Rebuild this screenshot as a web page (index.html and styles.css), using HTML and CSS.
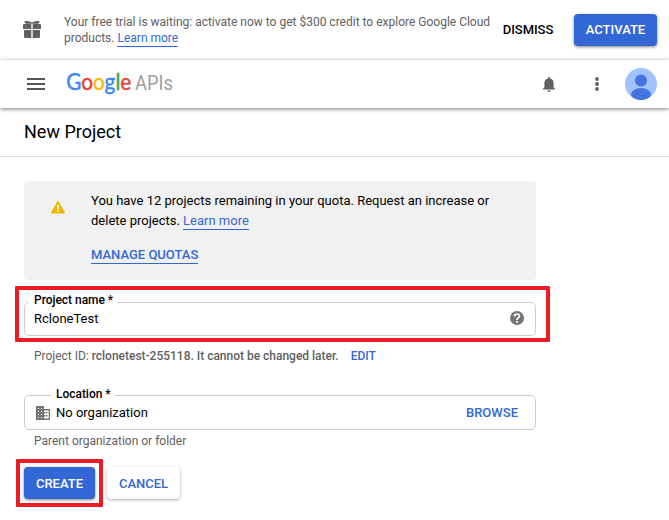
FILE: index.html
```html
<!DOCTYPE html>
<html lang="en">
<head>
<meta charset="utf-8">
<title>New Project</title>
<link rel="stylesheet" href="styles.css">
</head>
<body>
<section class="trial">
  <svg class="gift" width="18" height="19" viewBox="0 0 18 19"><path d="M1.2 1.2Q5 .3 9 2.4 13 .3 16.800 1.200L15.500 3.800H2.500zM0 5Q0 4 1 4H8.300V9H0zM9.700 4H17Q18 4 18 5V9H9.700zM1 10H8.300V18H2Q1 18 1 17zM9.700 10H17V17Q17 18 16 18H9.700z"/></svg>
  <p class="trial-text">Your free trial is waiting: activate now to get $300 credit to explore Google Cloud<br>products. <a class="link" href="#">Learn more</a></p>
  <button class="btn dismiss">DISMISS</button>
  <button class="btn primary activate">ACTIVATE</button>
</section>
<header class="topbar">
  <svg class="menu" width="18" height="12" viewBox="0 0 18 12"><path d="M0 0h18v2H0zM0 5h18v2H0zM0 10h18v2H0z"/></svg>
  <svg class="logo" width="108" height="30" viewBox="0 0 108 30">
    <text class="brand" x="-.8" y="21" textLength="65" lengthAdjust="spacingAndGlyphs"><tspan class="blue">G</tspan><tspan class="red">o</tspan><tspan class="yellow">o</tspan><tspan class="blue">g</tspan><tspan class="green">l</tspan><tspan class="red">e</tspan></text>
    <text class="apis" x="68" y="21" textLength="38" lengthAdjust="spacingAndGlyphs">APIs</text>
  </svg>
  <svg class="bell" width="12" height="15" viewBox="0 0 12 15"><path d="M4.500 13.500h3a1.500 1.500 0 0 1-3 0zM0 12.500v-.8L1.400 10.300V6Q1.400 2.500 5 1.600V1a1 1 0 0 1 2 0v.6Q10.600 2.500 10.600 6v4.300L12 11.700v.8z"/></svg>
  <svg class="more" width="4" height="14" viewBox="0 0 4 14"><circle cx="2" cy="2" r="1.900"/><circle cx="2" cy="7" r="1.900"/><circle cx="2" cy="12" r="1.900"/></svg>
  <svg class="avatar" width="32" height="32" viewBox="0 0 32 32"><defs><clipPath id="face"><circle cx="16" cy="16" r="16"/></clipPath></defs><g clip-path="url(#face)"><rect width="32" height="32" fill="#a0c3ff"/><circle cx="16" cy="12.500" r="6" fill="#4374e0"/><ellipse cx="16" cy="26.300" rx="10" ry="6.200" fill="#4374e0"/></g></svg>
</header>
<h1 class="title"><span>New Project</span></h1>
<main class="content">
  <section class="quota">
    <svg class="warning" width="14" height="13" viewBox="0 0 14 13"><path fill="#f4b400" d="M6 .9Q7-.7 8 .9L13.700 11Q14.200 12.500 13 12.500H1Q-.2 12.500 .3 11z"/><path fill="#fff" d="M6 4h2v4H6zM6 9h2v1.700H6z"/></svg>
    <div>
      <p class="quota-text">You have 12 projects remaining in your quota. Request an increase or<br>delete projects. <a class="link" href="#">Learn more</a></p>
      <a class="link manage" href="#">MANAGE QUOTAS</a>
    </div>
  </section>
  <div class="field name-field">
    <span class="label"><span>Project name *</span></span>
    <span class="value">RcloneTest</span>
    <svg class="help" width="14" height="14" viewBox="0 0 14 14"><circle cx="7" cy="7" r="7" fill="#757575"/><path d="M4.500 5.500Q4.500 3 7 3T9.500 5.300Q9.500 6.200 8.100 7 7 7.700 7 9" fill="none" stroke="#fff" stroke-width="1.700"/><path fill="#fff" d="M6.100 10h1.800v1.700H6.100z"/></svg>
    <i class="highlight highlight-name"></i>
  </div>
  <p class="project-id"><span>Project ID: <b>rclonetest-255118. It cannot be changed later.</b></span><a href="#">EDIT</a></p>
  <div class="field location-field">
    <span class="label"><span>Location *</span></span>
    <svg class="building" width="14" height="14" viewBox="0 0 14 14"><path fill="#757575" fill-rule="evenodd" d="M0 0h8v3h6v11H0zM2 2v1h1V2zM5 2v1h1V2zM2 5v1h1V5zM5 5v1h1V5zM2 8v1h1V8zM5 8v1h1V8zM2 11v1h1v-1zM5 11v1h1v-1zM8 4.500V6h1.500v1.500H8V9h1.500v1.500H8v2h4.700v-8zM10 6h1.500v1.500H10zM10 9h1.500v1.500H10z"/></svg>
    <span class="value">No organization</span>
    <a class="browse" href="#">BROWSE</a>
  </div>
  <p class="hint">Parent organization or folder</p>
  <div class="actions">
    <button class="btn primary create">CREATE</button>
    <button class="btn cancel">CANCEL</button>
    <i class="highlight highlight-create"></i>
  </div>
</main>
</body>
</html>
```

FILE: styles.css
```css
* { box-sizing: border-box; }
body { margin: 0; height: 520px; overflow: hidden; background: #fff; color: #000; font: 13px/20px Roboto, sans-serif; }
p, h1 { margin: 0; white-space: nowrap; }
svg { display: block; flex: none; }
a { color: #3367d6; text-decoration: none; }
.link { display: inline-block; border-bottom: 1px solid #3367d6; }
.btn { height: 32px; padding: 0; border: 0; border-radius: 4px; background: #fff; font: 500 13px/32px Roboto, sans-serif; flex: none; }
.primary { background: #3367d6; color: #fff; box-shadow: 0 1px 3px rgba(0,0,0,.5); }

.trial { display: flex; height: 60px; padding-left: 23px; align-items: flex-start; }
.gift { margin-top: 20px; fill: #616161; }
.trial-text { width: 427px; margin: 14px 0 0 23px; font-size: 12px; line-height: 16px; color: #616161; }
.trial-text .link { line-height: 15px; }
.dismiss { width: 52px; margin: 14px 0 0 11px; letter-spacing: -.05px; }
.activate { width: 83px; margin: 14px 0 0 20px; }

.topbar { position: relative; display: flex; align-items: center; height: 48px; padding: 0 12px 0 27px; background: #fff; box-shadow: 0 1px 4px rgba(0,0,0,.5); }
.menu { fill: #555; }
.logo { margin-left: 22px; }
.brand { font: 22.5px Lato, sans-serif; stroke-width: .5px; }
.blue { fill: #4285f4; stroke: #4285f4; }
.red { fill: #ea4335; stroke: #ea4335; }
.yellow { fill: #fbbc05; stroke: #fbbc05; }
.green { fill: #34a853; stroke: #34a853; }
.apis { font: 20px Roboto, sans-serif; fill: #a0a0a0; }
.bell { margin-left: auto; fill: #616161; }
.more { margin-left: 40px; fill: #616161; }
.avatar { margin-left: 26px; }

.title { height: 49px; padding-left: 24px; border-bottom: 1px solid #e0e0e0; font-size: 18px; font-weight: 400; line-height: 48px; }
.content { width: 536px; padding: 24px 0 0 24px; }
.quota { display: flex; height: 99px; padding: 10px 0 0 27px; border-radius: 4px; background: #f1f1f1; }
.warning { margin: 10px 26px 0 0; }
.quota-text .link { line-height: 17px; }
.manage { margin-top: 16px; font-weight: 500; line-height: 16px; }

.field { position: relative; display: flex; align-items: center; height: 34px; border: 1px solid #ccc; border-radius: 5px; }
.name-field { margin-top: 22px; padding: 0 11px 0 9px; }
.label { position: absolute; top: -11px; left: 4px; padding: 0 4px 0 5px; background: #fff; font-size: 12px; font-weight: 500; line-height: 16px; letter-spacing: -.03px; }
.help { margin: 0 0 2px auto; }
.project-id { display: flex; gap: 12px; margin-top: 10px; padding-left: 10px; font-size: 12px; letter-spacing: -.01px; color: #616161; }
.project-id b, .project-id a { font-weight: 500; }
.location-field { height: 35px; margin-top: 29px; padding: 0 17px 0 11px; }
.location-field .label { top: -10px; left: 26px; }
.building { margin-right: 6px; }
.browse { margin-left: auto; font-weight: 500; }
.hint { padding-left: 10px; margin-top: 1px; font-size: 12px; color: #616161; }
.actions { position: relative; display: flex; gap: 12px; margin-top: 16px; }
.create { width: 71px; line-height: 33px; }
.cancel { width: 73px; line-height: 33px; color: #3367d6; box-shadow: 0 1px 3px rgba(0,0,0,.35); }
.highlight { position: absolute; border: 4px solid #ed1c24; border-radius: 1px; }
.highlight-name { top: -17px; left: -10px; width: 535px; height: 56px; }
.highlight-create { top: -8px; left: -8px; width: 87px; height: 48px; }
```
